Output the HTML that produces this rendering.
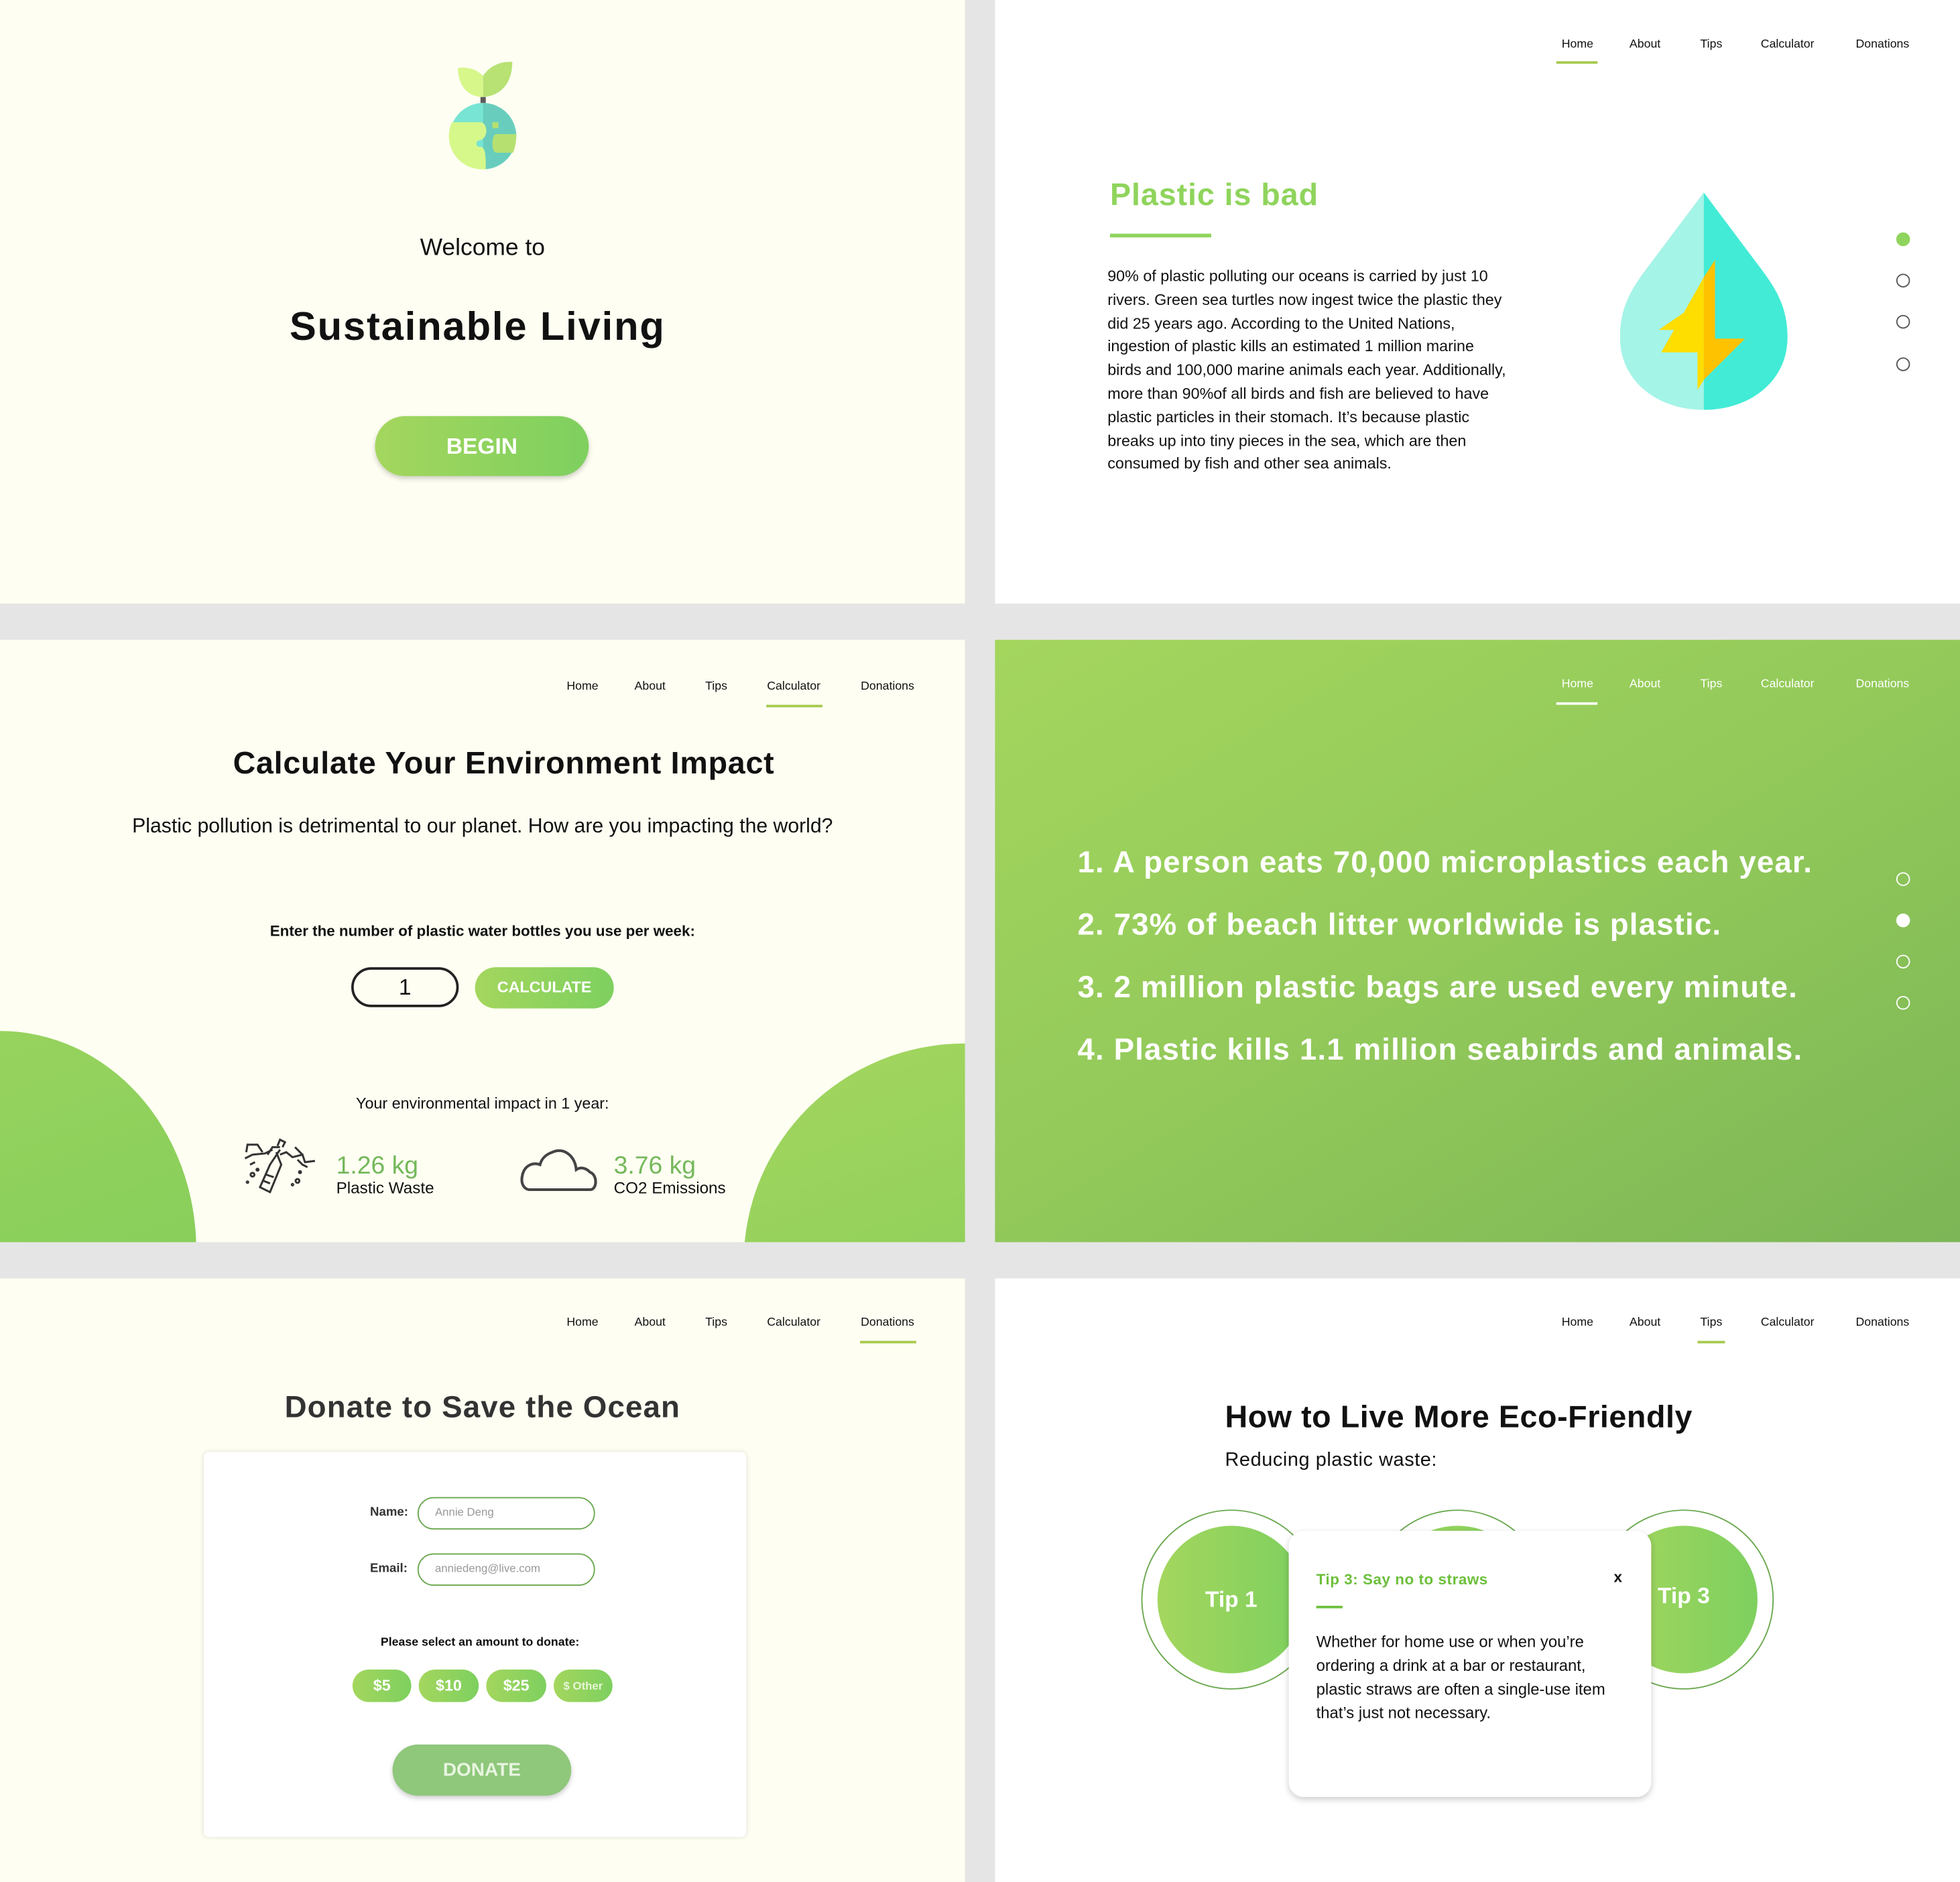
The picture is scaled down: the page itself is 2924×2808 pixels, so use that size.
<!DOCTYPE html>
<html><head><meta charset="utf-8">
<style>
*{margin:0;padding:0;box-sizing:border-box}
html,body{width:2924px;height:2808px;overflow:hidden;background:#e5e5e5}
#w{position:absolute;left:0;top:0;width:1568px;height:1506px;transform:scale(1.8648,1.8645);transform-origin:0 0;font-family:"Liberation Sans",sans-serif;color:#111}
.p{position:absolute;overflow:hidden}
.a{position:absolute;white-space:nowrap}
.c{transform:translateX(-50%)}
.nav{font-size:9.5px;color:#111}
.ul{position:absolute;height:2px;background:#a6c94e}
.g{background:linear-gradient(90deg,#a4d65e,#7ed05f)}
.dot{position:absolute;width:11px;height:11px;border-radius:50%;border:1.3px solid #555}
</style></head><body><div id="w">

<!-- Panel 1 -->
<div class="p" style="left:0;top:0;width:772px;height:483px;background:#fefef2">
<svg class="a" style="left:359px;top:49px" width="55" height="87" viewBox="0 8 100 164">
<path d="M12 18 C30 16 42 22 50 30 L50 62 C30 62 12 48 12 18Z" fill="#d7f78b"/>
<path d="M50 30 C58 18 72 8 94 9 C94 40 78 60 50 62Z" fill="#b8e274"/>
<rect x="46" y="62" width="8" height="9" fill="#5e5b5b"/>
<circle cx="50" cy="121" r="50" fill="#78e4d3"/>
<path d="M50 71 A50 50 0 0 1 50 171Z" fill="#69cdbd"/>
<path d="M3 100 L45 100 C58 100 58 125 45 127 C38 128 38 137 45 137 C54 137 54 150 54 171 L50 171 A50 50 0 0 1 3 100Z" fill="#d6f88a"/>
<path d="M70 118 L100 118 C100 130 98 140 95 146 L70 146 C62 146 62 118 70 118Z" fill="#b6e171"/>
<rect x="64" y="100" width="9" height="9" fill="#b6e171"/>
</svg>
<div class="a c" style="left:386px;top:188px;font-size:19px;">Welcome to</div>
<div class="a c" style="left:382px;top:243px;font-size:32px;font-weight:bold;letter-spacing:1px">Sustainable Living</div>
<div class="a g" style="left:300px;top:333px;width:171px;height:48px;border-radius:24px;box-shadow:0 2px 4px rgba(0,0,0,.2);color:#fff;font-weight:bold;font-size:18px;text-align:center;line-height:48px">BEGIN</div>
</div>

<!-- Panel 2 -->
<div class="p" style="left:796px;top:0;width:772px;height:483px;background:#fff">
<div class="a nav c" style="left:466px;top:30px">Home</div>
<div class="ul" style="left:449px;top:49px;width:33px"></div>
<div class="a nav c" style="left:520px;top:30px">About</div>
<div class="a nav c" style="left:573px;top:30px">Tips</div>
<div class="a nav c" style="left:634px;top:30px">Calculator</div>
<div class="a nav c" style="left:710px;top:30px">Donations</div>
<div class="a" style="left:92px;top:142px;font-size:25px;font-weight:bold;color:#8fd45c;letter-spacing:.5px">Plastic is bad</div>
<div class="a" style="left:92px;top:187px;width:81px;height:3px;background:#8fd45c"></div>
<div class="a" style="left:90px;top:212px;font-size:12.5px;line-height:18.8px;color:#111">90% of plastic polluting our oceans is carried by just 10<br>rivers. Green sea turtles now ingest twice the plastic they<br>did 25 years ago. According to the United Nations,<br>ingestion of plastic kills an estimated 1 million marine<br>birds and 100,000 marine animals each year. Additionally,<br>more than 90%of all birds and fish are believed to have<br>plastic particles in their stomach. It’s because plastic<br>breaks up into tiny pieces in the sea, which are then<br>consumed by fish and other sea animals.</div>
<svg class="a" style="left:500px;top:150px" width="136" height="180" viewBox="0 0 136 180">
<path d="M67 4 L22 64 C10 80 0 95 0 120 C0 155 30 178 67 178Z" fill="#a4f4e7"/>
<path d="M67 4 L112 64 C124 80 134 95 134 120 C134 155 104 178 67 178Z" fill="#42ebd6"/>
<path d="M76 83 L31 114 L65 114 L65 157 L67 154 L67 92Z" fill="#fedd00"/>
<path d="M67 72 L76 58 L76 121 L100 121 L67 154Z" fill="#fec200"/>
<path d="M67 72 L67 154 L62 162 L62 132 L33 132Z" fill="#fedd00"/>
</svg>
<div class="dot" style="left:721px;top:186px;background:#8fd45c;border-color:#8fd45c"></div>
<div class="dot" style="left:721px;top:219px"></div>
<div class="dot" style="left:721px;top:252px"></div>
<div class="dot" style="left:721px;top:286px"></div>
</div>

<!-- Panel 3 -->
<div class="p" style="left:0;top:512px;width:772px;height:482px;background:#fefef2">
<div class="a g" style="left:-157px;top:313px;width:314px;height:350px;border-radius:50%;background:linear-gradient(160deg,#9ad45e,#7ecb5a)"></div>
<div class="a g" style="left:595px;top:323px;width:354px;height:350px;border-radius:50%;background:linear-gradient(160deg,#a4d65e,#7ecb5a)"></div>
<div class="a nav c" style="left:466px;top:32px">Home</div>
<div class="a nav c" style="left:520px;top:32px">About</div>
<div class="a nav c" style="left:573px;top:32px">Tips</div>
<div class="a nav c" style="left:635px;top:32px">Calculator</div>
<div class="ul" style="left:613px;top:52px;width:45px"></div>
<div class="a nav c" style="left:710px;top:32px">Donations</div>
<div class="a c" style="left:403px;top:85px;font-size:25px;font-weight:bold;letter-spacing:.4px">Calculate Your Environment Impact</div>
<div class="a c" style="left:386px;top:140px;font-size:16.2px">Plastic pollution is detrimental to our planet. How are you impacting the world?</div>
<div class="a c" style="left:386px;top:226px;font-size:12px;font-weight:bold">Enter the number of plastic water bottles you use per week:</div>
<div class="a" style="left:281px;top:262px;width:86px;height:32px;border:2px solid #222;border-radius:16px;text-align:center;font-size:18px;line-height:28px">1</div>
<div class="a g" style="left:380px;top:262px;width:111px;height:33px;border-radius:17px;color:#fff;font-weight:bold;font-size:12.5px;text-align:center;line-height:33px">CALCULATE</div>
<div class="a c" style="left:386px;top:364px;font-size:12.5px">Your environmental impact in 1 year:</div>
<svg class="a" style="left:194px;top:398px" width="62" height="50" viewBox="0 0 62 50" fill="none" stroke="#333" stroke-width="1.6">
<path d="M3 12 L4 6 L12 6 L16 12 M2 17 L8 14 L18 13 L24 10 M10 20 L6 22 M30 14 L35 12 L40 16 L48 14 L50 20 L58 19 M42 8 L48 14 M44 18 L48 22 L52 24 M20 14 L24 8 L30 8 M28 7 L30 2 L34 4 L32 8"/>
<path d="M27 12 L31 22 L22 44 L14 40 L22 22 L30 10"/>
<path d="M19 30 L25 32 M17 35 L22 37"/>
<circle cx="8" cy="30" r="1.5"/><circle cx="12" cy="26" r=".8"/><circle cx="44" cy="35" r="1.5"/><circle cx="46" cy="28" r=".8"/><circle cx="4" cy="36" r=".6"/><circle cx="40" cy="38" r=".6"/>
</svg>
<div class="a" style="left:269px;top:410px;font-size:20px;color:#74b85a">1.26 kg</div>
<div class="a" style="left:269px;top:431px;font-size:13px">Plastic Waste</div>
<svg class="a" style="left:416px;top:404px" width="64" height="38" viewBox="0 0 64 38" fill="none" stroke="#444" stroke-width="2.2">
<path d="M8 36 L56 36 C62 36 62 24 56 22 C52 18 48 18 45 20 C44 8 34 2 26 6 C20 8 17 12 16 16 C11 14 4 16 2 24 C0 32 4 36 8 36Z"/>
</svg>
<div class="a" style="left:491px;top:410px;font-size:20px;color:#74b85a">3.76 kg</div>
<div class="a" style="left:491px;top:431px;font-size:13px">CO2 Emissions</div>
</div>

<!-- Panel 4 -->
<div class="p" style="left:796px;top:512px;width:772px;height:482px;background:linear-gradient(150deg,#a4d65e 0%,#92c95a 50%,#7cb656 100%)">
<div class="a nav c" style="left:466px;top:30px;color:#fff">Home</div>
<div class="ul" style="left:449px;top:50px;width:33px;background:#fff"></div>
<div class="a nav c" style="left:520px;top:30px;color:#fff">About</div>
<div class="a nav c" style="left:573px;top:30px;color:#fff">Tips</div>
<div class="a nav c" style="left:634px;top:30px;color:#fff">Calculator</div>
<div class="a nav c" style="left:710px;top:30px;color:#fff">Donations</div>
<div class="a" style="left:66px;top:154px;font-size:24.5px;line-height:50px;font-weight:bold;color:#fff;letter-spacing:.6px">1. A person eats 70,000 microplastics each year.<br>2. 73% of beach litter worldwide is plastic.<br>3. 2 million plastic bags are used every minute.<br>4. Plastic kills 1.1 million seabirds and animals.</div>
<div class="dot" style="left:721px;top:186px;border-color:#fff"></div>
<div class="dot" style="left:721px;top:219px;border-color:#fff;background:#fff"></div>
<div class="dot" style="left:721px;top:252px;border-color:#fff"></div>
<div class="dot" style="left:721px;top:285px;border-color:#fff"></div>
</div>

<!-- Panel 5 -->
<div class="p" style="left:0;top:1023px;width:772px;height:483px;background:#fefef2">
<div class="a nav c" style="left:466px;top:30px">Home</div>
<div class="a nav c" style="left:520px;top:30px">About</div>
<div class="a nav c" style="left:573px;top:30px">Tips</div>
<div class="a nav c" style="left:635px;top:30px">Calculator</div>
<div class="a nav c" style="left:710px;top:30px">Donations</div>
<div class="ul" style="left:688px;top:50px;width:45px"></div>
<div class="a c" style="left:386px;top:90px;font-size:24.5px;font-weight:bold;color:#333;letter-spacing:.6px">Donate to Save the Ocean</div>
<div class="a" style="left:163px;top:139px;width:434px;height:308px;background:#fff;border-radius:4px;box-shadow:0 0 4px rgba(0,0,0,.12)"></div>
<div class="a" style="left:296px;top:182px;font-size:10px;font-weight:bold;color:#333">Name:</div>
<div class="a" style="left:334px;top:175px;width:142px;height:26px;border:1.5px solid #6aa84f;border-radius:13px;font-size:9px;color:#999;padding-left:13px;line-height:23px">Annie Deng</div>
<div class="a" style="left:296px;top:227px;font-size:10px;font-weight:bold;color:#333">Email:</div>
<div class="a" style="left:334px;top:220px;width:142px;height:26px;border:1.5px solid #6aa84f;border-radius:13px;font-size:9px;color:#999;padding-left:13px;line-height:23px">anniedeng@live.com</div>
<div class="a c" style="left:384px;top:286px;font-size:9.5px;font-weight:bold">Please select an amount to donate:</div>
<div class="a g" style="left:282px;top:313px;width:47px;height:26px;border-radius:13px;color:#fff;font-weight:bold;font-size:12.5px;text-align:center;line-height:26px">$5</div>
<div class="a g" style="left:335px;top:313px;width:48px;height:26px;border-radius:13px;color:#fff;font-weight:bold;font-size:12.5px;text-align:center;line-height:26px">$10</div>
<div class="a g" style="left:389px;top:313px;width:48px;height:26px;border-radius:13px;color:#fff;font-weight:bold;font-size:12.5px;text-align:center;line-height:26px">$25</div>
<div class="a g" style="left:443px;top:313px;width:47px;height:26px;border-radius:13px;color:#e8f5d8;font-weight:bold;font-size:9px;text-align:center;line-height:26px">$ Other</div>
<div class="a" style="left:314px;top:373px;width:143px;height:41px;border-radius:21px;background:#8fc77b;box-shadow:0 2px 4px rgba(0,0,0,.2);color:#e8f5e0;font-weight:bold;font-size:15px;text-align:center;line-height:41px">DONATE</div>
</div>

<!-- Panel 6 -->
<div class="p" style="left:796px;top:1023px;width:772px;height:483px;background:#fff">
<div class="a nav c" style="left:466px;top:30px">Home</div>
<div class="a nav c" style="left:520px;top:30px">About</div>
<div class="a nav c" style="left:573px;top:30px">Tips</div>
<div class="ul" style="left:562px;top:50px;width:22px"></div>
<div class="a nav c" style="left:634px;top:30px">Calculator</div>
<div class="a nav c" style="left:710px;top:30px">Donations</div>
<div class="a" style="left:184px;top:97px;font-size:25px;font-weight:bold;letter-spacing:.3px">How to Live More Eco-Friendly</div>
<div class="a" style="left:184px;top:137px;font-size:15.5px;letter-spacing:.3px">Reducing plastic waste:</div>
<div class="a" style="left:117px;top:185px;width:144px;height:144px;border-radius:50%;border:1.2px solid #6aa84f"></div>
<div class="a g" style="left:130px;top:198px;width:118px;height:118px;border-radius:50%;color:#fff;font-weight:bold;font-size:18px;line-height:118px;text-align:center">Tip 1</div>
<div class="a" style="left:298px;top:185px;width:144px;height:144px;border-radius:50%;border:1.2px solid #6aa84f"></div>
<div class="a g" style="left:311px;top:198px;width:118px;height:118px;border-radius:50%"></div>
<div class="a" style="left:479px;top:185px;width:144px;height:144px;border-radius:50%;border:1.2px solid #6aa84f"></div>
<div class="a g" style="left:492px;top:198px;width:118px;height:118px;border-radius:50%;color:#fff;font-weight:bold;font-size:18px;line-height:112px;text-align:center">Tip 3</div>
<div class="a" style="left:235px;top:202px;width:290px;height:213px;background:#fff;border-radius:12px;box-shadow:0 2px 5px rgba(0,0,0,.2)"></div>
<div class="a" style="left:257px;top:234px;font-size:12px;font-weight:bold;color:#6cbf3a;letter-spacing:.3px">Tip 3: Say no to straws</div>
<div class="a" style="left:495px;top:232px;font-size:12px;font-weight:bold">x</div>
<div class="a" style="left:257px;top:262px;width:21px;height:2px;background:#6cbf3a"></div>
<div class="a" style="left:257px;top:281px;font-size:12.8px;line-height:19px">Whether for home use or when you’re<br>ordering a drink at a bar or restaurant,<br>plastic straws are often a single-use item<br>that’s just not necessary.</div>
</div>

</div></body></html>
